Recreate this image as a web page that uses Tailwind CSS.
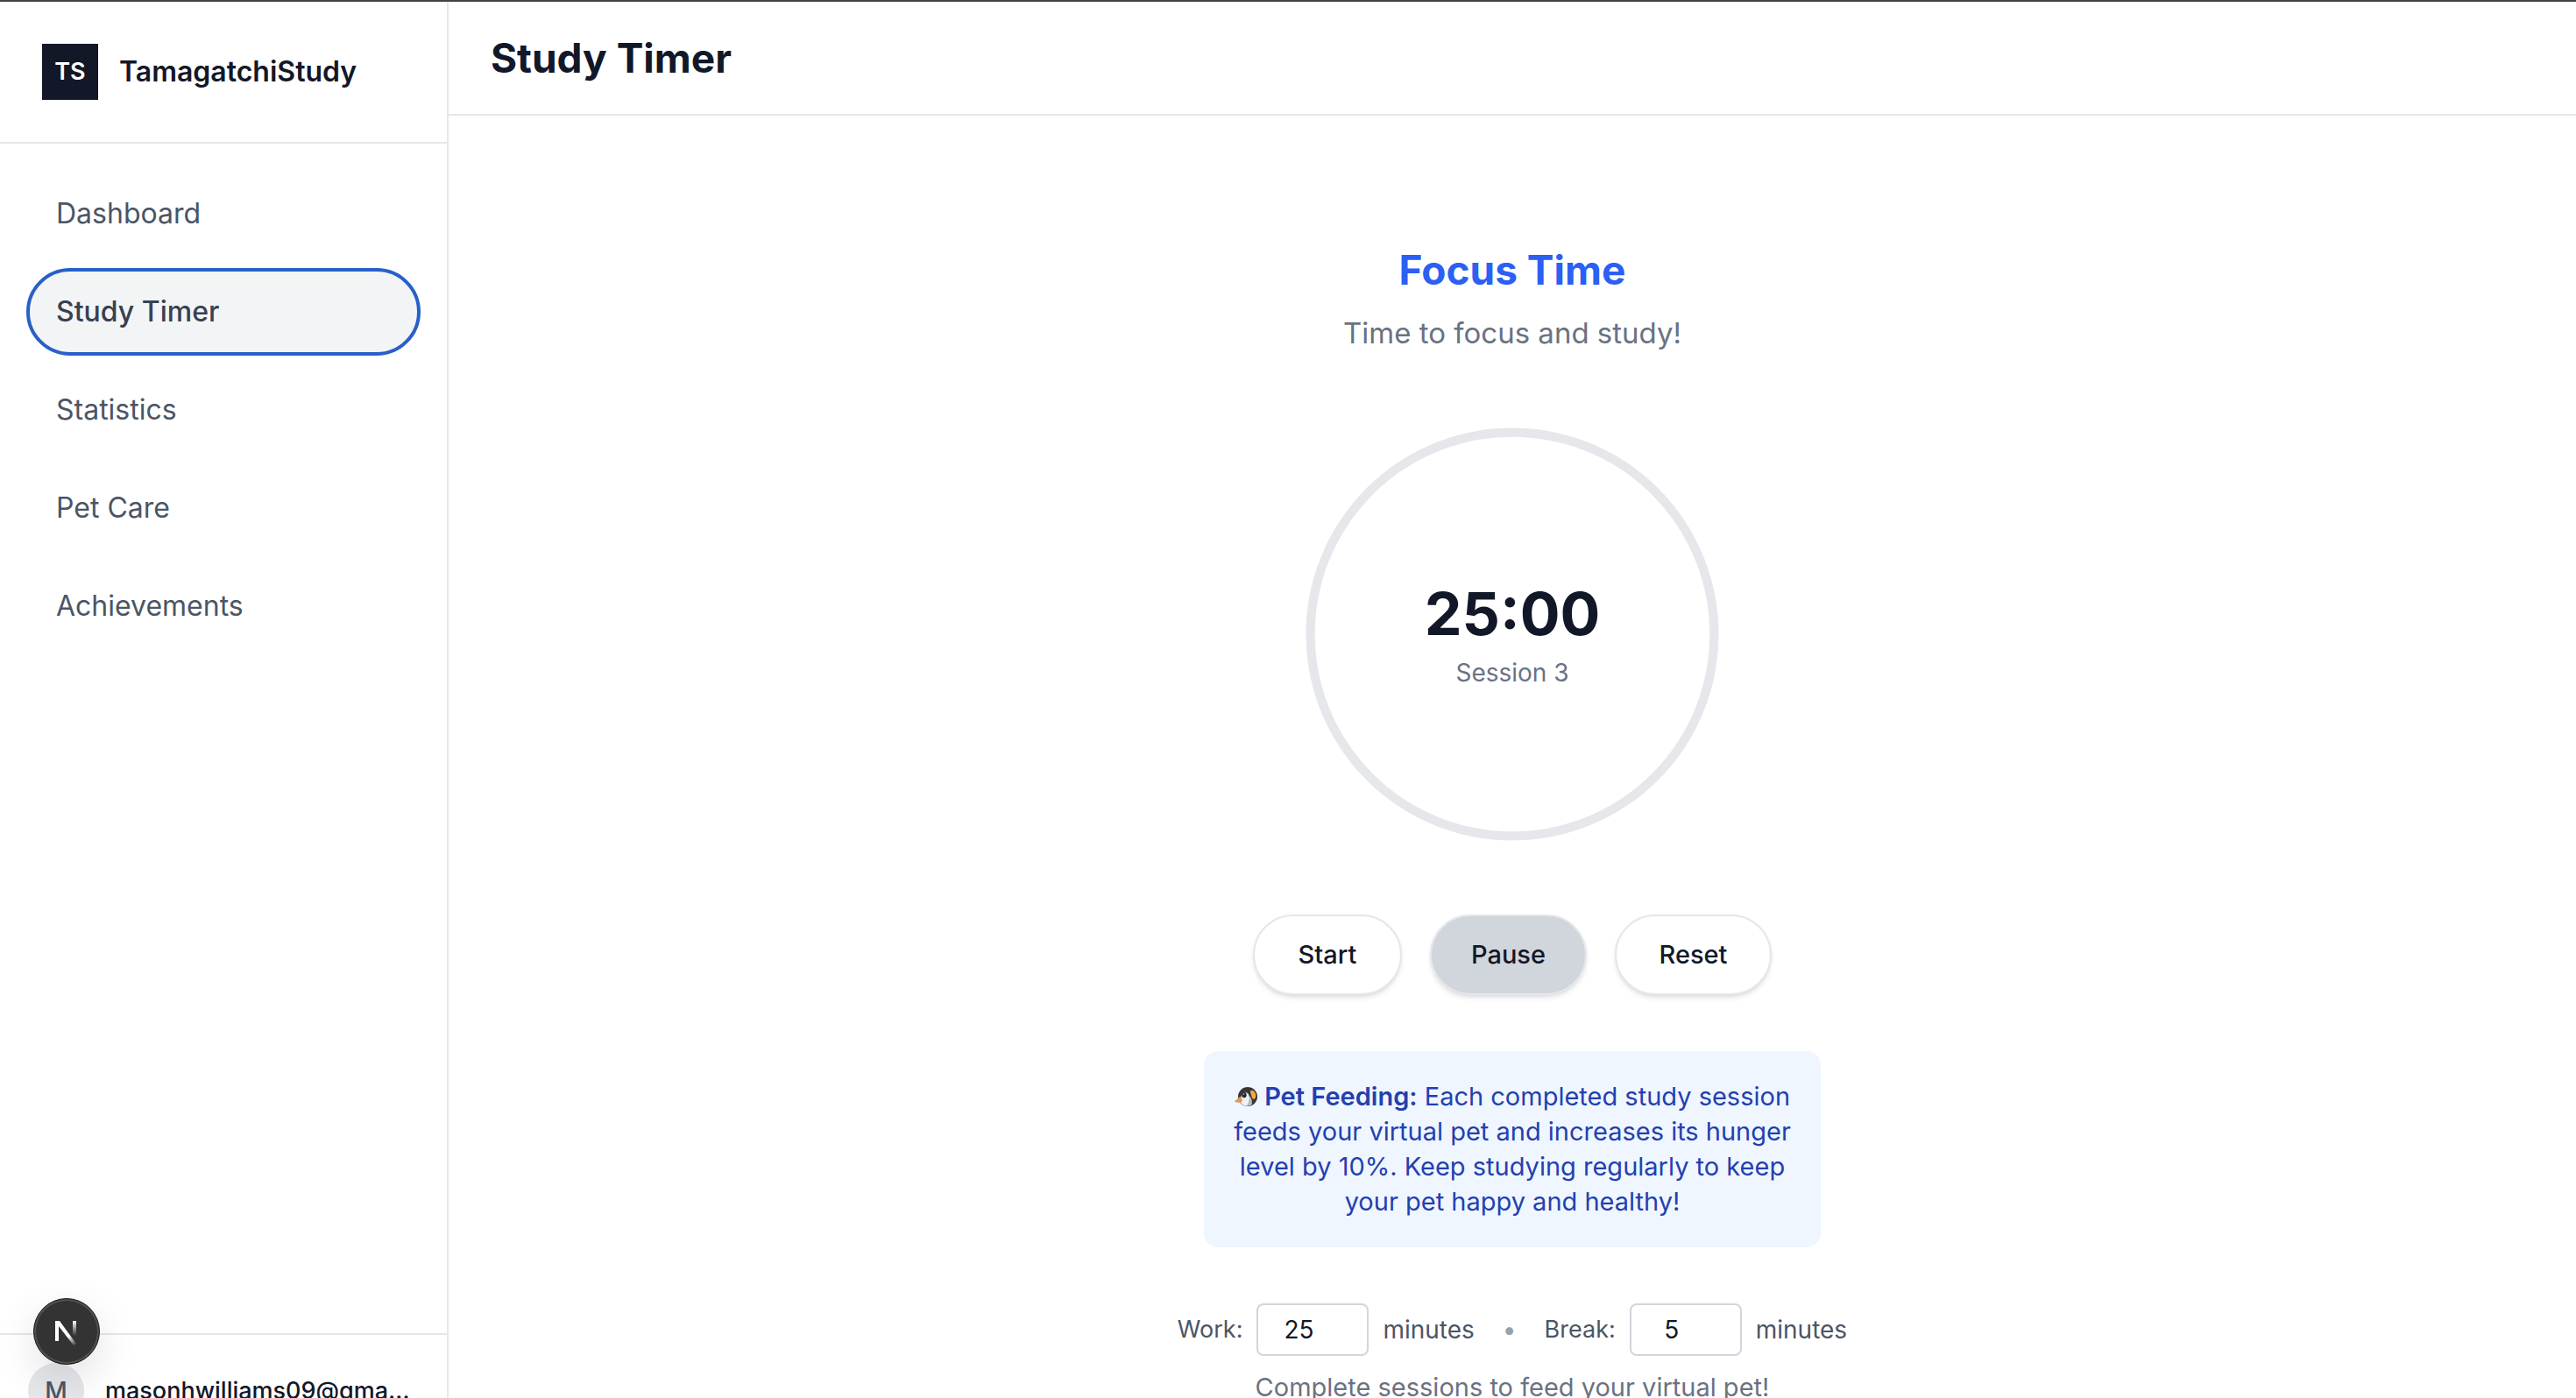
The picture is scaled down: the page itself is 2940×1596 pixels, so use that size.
<!DOCTYPE html>
<html lang="en">
<head>
<meta charset="utf-8">
<meta name="viewport" content="width=device-width, initial-scale=1">
<title>Study Timer</title>
<script src="https://cdn.jsdelivr.net/npm/@tailwindcss/browser@4"></script>
</head>
<body class="h-screen overflow-hidden border-t-2 border-[#444142] bg-white font-['Inter',sans-serif] text-[#121828]">
<div class="flex">
  <aside class="flex h-[calc(100vh+54px)] w-[512px] shrink-0 flex-col border-r-2 border-[#e5e7eb]">
    <div class="flex items-center gap-6 border-b-2 border-[#e5e7eb] p-12">
      <div class="flex size-16 items-center justify-center bg-[#121828] text-[27px] font-semibold text-white">TS</div>
      <span class="text-[32px] leading-12 font-semibold">TamagatchiStudy</span>
    </div>
    <nav class="flex flex-1 flex-col gap-4 p-8 text-[32px] leading-12 text-[#4b5565]">
      <a href="#" class="rounded-full px-8 py-6">Dashboard</a>
      <a href="#" class="rounded-full bg-[#f3f4f6] px-8 py-6 font-medium text-[#374151] outline-4 -outline-offset-2 outline-[#2860c8]">Study Timer</a>
      <a href="#" class="rounded-full px-8 py-6">Statistics</a>
      <a href="#" class="rounded-full px-8 py-6">Pet Care</a>
      <a href="#" class="rounded-full px-8 py-6">Achievements</a>
    </nav>
    <div class="flex items-center gap-6 border-t-2 border-[#e5e7eb] p-8">
      <div class="flex size-16 shrink-0 items-center justify-center rounded-full bg-[#e5e7eb] text-[28px] font-medium text-[#4b5565]">M</div>
      <span class="text-[27px] leading-10 font-medium whitespace-nowrap">masonhwilliams09@gma…</span>
    </div>
  </aside>

  <div class="min-w-0 flex-1">
    <header class="border-b-2 border-[#e5e7eb] px-12 py-8">
      <h1 class="text-[46px] leading-16 font-bold">Study Timer</h1>
    </header>
    <main class="flex flex-col items-center pt-36 text-[29px] leading-10">
      <h2 class="text-[46px] leading-16 font-bold text-[#2b5ff5]">Focus Time</h2>
      <p class="mt-4 text-[33px] leading-12 text-[#6a7282]">Time to focus and study!</p>

      <div class="mt-16 grid size-128 place-items-center">
        <svg class="col-start-1 row-start-1 size-128" viewBox="0 0 100 100" fill="none" aria-hidden="true">
          <circle cx="50" cy="50" r="45" stroke="#e5e7eb" stroke-width="2"/>
        </svg>
        <div class="col-start-1 row-start-1 text-center">
          <div class="text-[68px] leading-20 font-bold">25:00</div>
          <div class="mt-2 text-[28px] leading-10 text-[#6a7282]">Session 3</div>
        </div>
      </div>

      <div class="mt-16 flex gap-8 font-medium">
        <button class="w-[170px] rounded-full border-2 border-[#e5e7eb] bg-white py-6 leading-10 shadow-md">Start</button>
        <button class="w-[179px] rounded-full border-2 border-[#e5e7eb] bg-[#d1d5dc] py-6 leading-10 shadow-md">Pause</button>
        <button class="w-[179px] rounded-full border-2 border-[#e5e7eb] bg-white py-6 leading-10 shadow-md">Reset</button>
      </div>

      <p class="mt-16 w-[704px] rounded-2xl bg-[#eff6ff] py-8 text-center whitespace-nowrap text-[#2340af]">
        <svg class="inline-block h-6 w-[26px] align-[-2px]" viewBox="0 0 78 72" role="img" aria-label="Penguin">
          <circle cx="45" cy="36" r="33" fill="#35373b"/>
          <path d="M28 22c10-5 22 2 23 16 1 14-3 24-9 30C30 68 20 60 18 48z" fill="#f1f1f3"/>
          <path d="M50 34c2 13-1 26-8 34 6 1 13-1 17-4 3-12-1-24-9-30z" fill="#b9bbc0"/>
          <ellipse cx="33" cy="30" rx="8" ry="10" fill="#26272b"/>
          <circle cx="32" cy="27" r="2" fill="#fff"/>
          <path d="M57 14c8-1 16 8 16 18 0 8-4 13-8 12-7-2-6-10-9-17-2-6-3-12 1-13z" fill="#f8a93a"/>
          <path d="M18 36c6 2 10 8 8 16-7 6-18 5-26 1 4-6 11-9 18-17z" fill="#e49b50"/>
        </svg>
        <strong class="font-semibold">Pet Feeding:</strong> Each completed study session<br>
        feeds your virtual pet and increases its hunger<br>
        level by 10%. Keep studying regularly to keep<br>
        your pet happy and healthy!
      </p>

      <div class="mt-16 flex items-center gap-8 text-[28px] text-[#4b5565]">
        <div class="flex items-center gap-4">
          <label for="work" class="text-[27px]">Work:</label>
          <input id="work" type="number" value="25" class="h-15 w-32 appearance-none rounded-lg border-2 border-[#d1d5dc] bg-white pr-12 pl-4 text-center text-[#121828] [-moz-appearance:textfield] [&::-webkit-inner-spin-button]:appearance-none">
          <span>minutes</span>
        </div>
        <span class="text-[#99a1af]">•</span>
        <div class="flex items-center gap-4">
          <label for="break" class="text-[27px]">Break:</label>
          <input id="break" type="number" value="5" class="h-15 w-32 appearance-none rounded-lg border-2 border-[#d1d5dc] bg-white pr-12 pl-4 text-center text-[#121828] [-moz-appearance:textfield] [&::-webkit-inner-spin-button]:appearance-none">
          <span>minutes</span>
        </div>
      </div>
      <p class="mt-4 text-[#6a7282]">Complete sessions to feed your virtual pet!</p>
    </main>
  </div>
</div>

<button aria-label="Open developer tools" class="fixed bottom-[38px] left-[38px] flex size-19 items-center justify-center rounded-full border border-[#171717] bg-[#333333] shadow-[0_16px_48px_rgba(0,0,0,0.12)] inset-ring-2 inset-ring-white/15">
  <svg class="size-10" viewBox="0 0 40 40" fill="none" aria-hidden="true">
    <defs>
      <linearGradient id="diag" x1="23" y1="25" x2="31" y2="36" gradientUnits="userSpaceOnUse"><stop stop-color="#fff"/><stop offset="1" stop-color="#fff" stop-opacity="0"/></linearGradient>
      <linearGradient id="stem" x1="28" y1="8" x2="28" y2="25" gradientUnits="userSpaceOnUse"><stop stop-color="#fff"/><stop offset="1" stop-color="#fff" stop-opacity="0"/></linearGradient>
    </defs>
    <path d="M7 8h5L31 34l-3 2L11 14v17H7z" fill="url(#diag)"/>
    <path d="M27 8h4v17h-4z" fill="url(#stem)"/>
  </svg>
</button>
</body>
</html>
